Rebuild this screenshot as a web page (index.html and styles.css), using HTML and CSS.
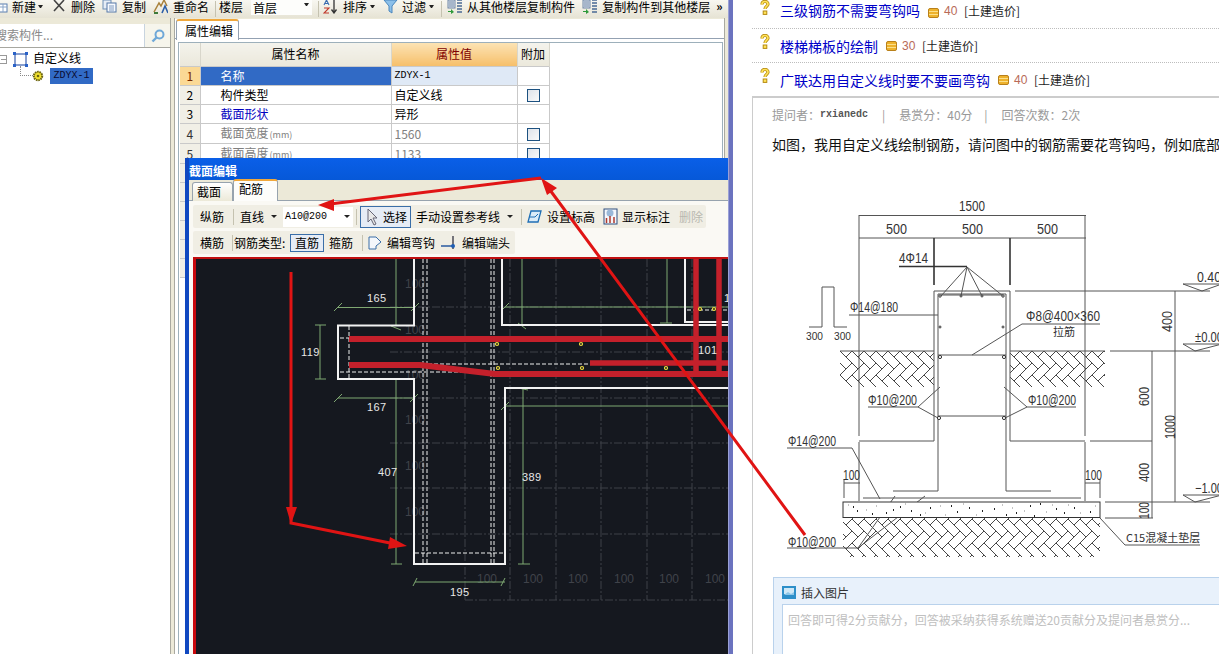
FILE: index.html
```html
<!DOCTYPE html>
<html lang="zh-CN">
<head>
<meta charset="utf-8">
<title>自定义线</title>
<link rel="stylesheet" href="styles.css">
</head>
<body>
<svg class="defs" width="0" height="0" aria-hidden="true">
  <defs>
    <path id="hbt" d="M0 24L12 12L18 18L6 30L0 24M6 6L12 0L24 12L18 18L6 6"/>
    <pattern id="herring" x="840" y="350" width="12" height="24" patternUnits="userSpaceOnUse">
      <g fill="none" stroke="#444" stroke-width=".9">
        <use href="#hbt"/><use href="#hbt" x="-12"/><use href="#hbt" y="-24"/><use href="#hbt" x="-12" y="-24"/>
      </g>
    </pattern>
    <symbol id="list" viewBox="0 0 15 15">
      <rect x="1" y="1" width="7" height="8" fill="#dfe6ef" stroke="#6f86a6"/>
      <path d="M2 3h5M2 5h5M2 7h5" stroke="#6f86a6"/>
      <path d="M10 1h5M10 4h5M10 7h5M10 10h5M10 13h5" stroke="#4a6a94" stroke-width="1.4"/>
      <path d="M1 12h3v-2l3 3-3 2v-2H1z" fill="#2e9a3a"/>
    </symbol>
    <symbol id="qmark" viewBox="0 0 10 15">
      <path d="M2 4.5C2 2 3.5 1.5 5 1.5S8 2.5 8 4.3 5 6.5 5 9" fill="none" stroke="#b58a10" stroke-width="3.2"/>
      <path d="M2 4.5C2 2 3.5 1.5 5 1.5S8 2.5 8 4.3 5 6.5 5 9" fill="none" stroke="#ffe35a" stroke-width="1.6"/>
      <rect x="3.2" y="11" width="3.6" height="3.4" fill="#ffe35a" stroke="#b58a10"/>
    </symbol>
    <symbol id="coin" viewBox="0 0 11 10">
      <rect x=".5" y=".5" width="10" height="9" rx="1.5" fill="#eeb22c" stroke="#b9801a"/>
      <path d="M1 3.5h9M1 6.500h9" stroke="#fbe08a"/>
    </symbol>
  </defs>
</svg>

<div class="page">
  <div class="app">
    <div class="toolbar">
      <svg class="ico ml-n6" width="14" height="14" viewBox="0 0 14 14"><rect x="1" y="5" width="12" height="8" fill="#fff" stroke="#5b7fb0"/><path d="M1 8h12M5 5v8M9 5v8" stroke="#8aa5c8"/></svg>
      <span class="t ml-4">新建</span><i class="caret ml-2"></i>
      <svg class="ico ml-10" width="12" height="13" viewBox="0 0 12 13"><path d="M1 1l10 11M11 1L1 12" stroke="#444" stroke-width="1.6"/></svg>
      <span class="t ml-6">删除</span>
      <svg class="ico ml-7" width="15" height="14" viewBox="0 0 15 14"><rect x="1" y="1" width="8" height="9" fill="#e6edf6" stroke="#6f8fb6"/><rect x="5" y="4" width="9" height="9" fill="#f6f9fd" stroke="#5679a8"/><path d="M7 7h5M7 9h5M7 11h5" stroke="#7f9ac0"/></svg>
      <span class="t ml-5">复制</span>
      <svg class="ico ml-7" width="15" height="15" viewBox="0 0 15 15"><path d="M1 13l5-9 2 3 3-6 3 6" fill="none" stroke="#a9823c" stroke-width="1.5"/><path d="M9 14l3-7 3 7" fill="none" stroke="#2d5fa8" stroke-width="1.6"/><path d="M1 14h4" stroke="#3d7a3a" stroke-width="2"/></svg>
      <span class="t ml-5">重命名</span>
      <i class="sep ml-6"></i>
      <span class="t ml-3">楼层</span>
      <span class="combo top-combo ml-8"><span class="t">首层</span><i class="caret dark"></i></span>
      <i class="sep ml-6"></i>
      <svg class="ico ml-4" width="15" height="15" viewBox="0 0 15 15"><path d="M1 6l2.5-5L6 6M2 4.5h3" fill="none" stroke="#3a6cb0" stroke-width="1.1"/><path d="M1 9h5L1 14h5" fill="none" stroke="#c0392b" stroke-width="1.1"/><path d="M11 1v12M8.5 10.5L11 14l2.5-3.5" fill="none" stroke="#333" stroke-width="1.3"/></svg>
      <span class="t ml-5">排序</span><i class="caret ml-3"></i>
      <svg class="ico ml-8" width="15" height="15" viewBox="0 0 15 15"><path d="M1 1h13L9 7v7L6 12V7z" fill="#8cc0ea" stroke="#4a86bd"/></svg>
      <span class="t ml-4">过滤</span><i class="caret ml-3"></i>
      <i class="sep ml-7"></i>
      <svg class="ico ml-5" width="15" height="15"><use href="#list"/></svg>
      <span class="t ml-5">从其他楼层复制构件</span>
      <svg class="ico ml-7" width="15" height="15"><use href="#list"/></svg>
      <span class="t ml-5">复制构件到其他楼层</span>
      <span class="t more ml-6">»</span>
    </div>

    <div class="workspace">
      <aside class="tree-pane">
        <div class="search">
          <span class="search-input">搜索构件...</span>
          <span class="search-btn">
            <svg width="16" height="16" viewBox="0 0 16 16"><circle cx="9.5" cy="6.5" r="4" fill="none" stroke="#6fa8d8" stroke-width="2"/><path d="M6.5 9.500L2.500 13.500" stroke="#6fa8d8" stroke-width="2.4"/></svg>
          </span>
        </div>
        <div class="tree">
          <div class="node root">
            <i class="minus"></i>
            <svg class="node-ico" width="15" height="15" viewBox="0 0 15 15"><rect x="2" y="2" width="11" height="11" fill="none" stroke="#123f9c"/><path d="M0 0h3v3H0zM12 0h3v3h-3zM0 12h3v3H0zM12 12h3v3h-3z" fill="#2a62c8"/></svg>
            <span class="t">自定义线</span>
          </div>
          <div class="node leaf">
            <i class="branch"></i>
            <svg class="gear" width="12" height="12" viewBox="0 0 12 12"><circle cx="6" cy="6" r="4.2" fill="#f0e030" stroke="#6b6410" stroke-width="2" stroke-dasharray="1.600 .7"/><circle cx="6" cy="6" r="1.300" fill="#6b6410"/></svg>
            <span class="selected">ZDYX-1</span>
          </div>
        </div>
      </aside>
      <div class="splitter"></div>
      <section class="props">
        <div class="tabstrip"><span class="tab active t">属性编辑</span></div>
        <div class="grid-frame">
          <table class="prop-table">
            <colgroup><col class="c-num"><col class="c-name"><col class="c-val"><col class="c-add"></colgroup>
            <thead>
              <tr><th class="num"></th><th>属性名称</th><th class="hot">属性值</th><th>附加</th></tr>
            </thead>
            <tbody>
              <tr class="cur"><td class="num">1</td><td class="name">名称</td><td class="val mono">ZDYX-1</td><td></td></tr>
              <tr><td class="num">2</td><td class="name">构件类型</td><td class="val">自定义线</td><td><i class="check"></i></td></tr>
              <tr><td class="num">3</td><td class="name blue">截面形状</td><td class="val">异形</td><td></td></tr>
              <tr class="dim"><td class="num">4</td><td class="name">截面宽度<small>(mm)</small></td><td class="val">1560</td><td><i class="check"></i></td></tr>
              <tr class="dim"><td class="num">5</td><td class="name">截面高度<small>(mm)</small></td><td class="val">1133</td><td><i class="check"></i></td></tr>
              <tr><td class="num"></td><td></td><td></td><td></td></tr>
              <tr><td class="num"></td><td></td><td></td><td></td></tr>
              <tr><td class="num"></td><td></td><td></td><td></td></tr>
              <tr><td class="num"></td><td></td><td></td><td></td></tr>
              <tr><td class="num"></td><td></td><td></td><td></td></tr>
              <tr><td class="num"></td><td></td><td></td><td></td></tr>
            </tbody>
          </table>
        </div>
      </section>
    </div>
  </div>

  <div class="divider"></div>

  <main class="qa">
    <ul class="questions">
      <li class="q first"><svg class="qm" width="10" height="15"><use href="#qmark"/></svg><a class="qlink">三级钢筋不需要弯钩吗</a><svg class="coin" width="11" height="10"><use href="#coin"/></svg><span class="score">40</span><span class="cat">[土建造价]</span></li>
      <li class="q"><svg class="qm" width="10" height="15"><use href="#qmark"/></svg><a class="qlink">楼梯梯板的绘制</a><svg class="coin" width="11" height="10"><use href="#coin"/></svg><span class="score">30</span><span class="cat">[土建造价]</span></li>
      <li class="q last"><svg class="qm" width="10" height="15"><use href="#qmark"/></svg><a class="qlink">广联达用自定义线时要不要画弯钩</a><svg class="coin" width="11" height="10"><use href="#coin"/></svg><span class="score">40</span><span class="cat">[土建造价]</span></li>
    </ul>
    <article class="detail">
      <div class="meta"><span>提问者：</span><b class="author">rxianedc</b><span class="bar">|</span><span class="reward">悬赏分：40分</span><span class="bar">|</span><span>回答次数：2次</span></div>
      <p class="body-text">如图，我用自定义线绘制钢筋，请问图中的钢筋需要花弯钩吗，例如底部的钢筋</p>
      <svg class="blueprint" width="447" height="370" viewBox="772 190 447 370">
        <rect x="840" y="350" width="94" height="36" fill="url(#herring)"/>
        <rect x="1010" y="350" width="95" height="36" fill="url(#herring)"/>
        <rect x="843" y="517" width="257" height="39" fill="url(#herring)"/>
        <g class="ln">
          <path d="M859 214.500H1086M859 237H1086M859 214V435M859 441V500M1085 214V435M1085 441V500"/>
          <path d="M934 290H1010M938 293H1006M934 290V440M1010 290V440M938 293V490M1006 293V490M859 440H934M1010 440H1085M893 490H938M1006 490H1051"/>
          <path d="M809 326H822V286H834V326H847M967 266L941 295M967 266L961 295M967 266L982 295M967 266L1003 295M941 294H1003"/>
          <path d="M849 314H938M1022 323H1100M1022 323L972 354M938 354H1006M938 415H1006"/>
          <path d="M1015 290H1210M1110 350H1210M1175 290V501M1152 350V517M1090 440H1152M1105 501H1210M1105 517H1153"/>
          <path d="M1183 283H1222L1202 290ZM1183 343H1222L1195 350ZM1183 494H1222L1195 501Z"/>
          <path d="M868 406H918L940 386M918 406L938 417M1027 406H1076M1027 406L1004 386M1027 406L1005 417"/>
          <path d="M787 447H852L880 498M844 482H860M844 478V497M1085 482H1100M1100 478V497"/>
          <path d="M863 497H1081M787 547H858L895 495M858 547L925 495M1100 517L1125 544H1200"/>
          <path d="M840 350H934M1010 350H1105"/>
        </g>
        <path class="ln bold" d="M934 237V284M1010 237V284M899 265.500H967"/>
        <rect class="slab" x="843" y="501" width="257" height="15.500"/>
        <path class="speck" d="M853 506h1M857 510h1M886 512h1M893 509h1M900 506h1M911 510h1M930 507h1M951 505h1M957 511h1M969 507h1M982 510h1M994 508h1M1016 512h1M1040 503h1M1056 508h1M1074 507h1M1090 511h1M872 513h1M920 514h1M1006 514h1M1034 515h1M1030 505h1M1064 512h1"/>
        <path class="speck2" d="M848 504h1M866 509h1M876 505h1M905 503h1M925 512h1M940 505h1M945 514h1M963 503h1M976 514h1M1002 504h1M1012 507h1M1024 510h1M1046 511h1M1052 504h1M1068 504h1M1080 512h1M1095 505h1"/>
        <g class="dots"><circle cx="940" cy="295" r="1.200"/><circle cx="1003" cy="295" r="1.200"/><circle cx="961" cy="295" r="1"/><circle cx="982" cy="295" r="1"/><circle cx="940" cy="326" r="1"/><circle cx="1003" cy="326" r="1"/><circle cx="940" cy="356" r="1.600"/><circle cx="1004" cy="356" r="1.600"/><circle cx="939" cy="417" r="1.600"/><circle cx="1004" cy="417" r="1.600"/></g>
        <g class="cad">
          <text x="959" y="210" textLength="26" lengthAdjust="spacingAndGlyphs">1500</text>
          <text x="886" y="233" textLength="21" lengthAdjust="spacingAndGlyphs">500</text>
          <text x="962" y="233" textLength="21" lengthAdjust="spacingAndGlyphs">500</text>
          <text x="1037" y="233" textLength="21" lengthAdjust="spacingAndGlyphs">500</text>
          <text x="899" y="262" textLength="29" lengthAdjust="spacingAndGlyphs">4Φ14</text>
          <text x="850" y="311" textLength="48" lengthAdjust="spacingAndGlyphs">Φ14@180</text>
          <text x="806" y="339" class="small" textLength="17" lengthAdjust="spacingAndGlyphs">300</text>
          <text x="834" y="339" class="small" textLength="17" lengthAdjust="spacingAndGlyphs">300</text>
          <text x="1026" y="320" textLength="74" lengthAdjust="spacingAndGlyphs">Φ8@400×360</text>
          <text x="1053" y="335" class="cjk">拉筋</text>
          <text x="1197" y="281" textLength="24" lengthAdjust="spacingAndGlyphs">0.40</text>
          <text x="1195" y="341" textLength="28" lengthAdjust="spacingAndGlyphs">±0.00</text>
          <text x="1195" y="492" textLength="28" lengthAdjust="spacingAndGlyphs">−1.00</text>
          <text x="868" y="404" textLength="49" lengthAdjust="spacingAndGlyphs">Φ10@200</text>
          <text x="1028" y="404" textLength="48" lengthAdjust="spacingAndGlyphs">Φ10@200</text>
          <text x="788" y="445" textLength="48" lengthAdjust="spacingAndGlyphs">Φ14@200</text>
          <text x="843" y="479" textLength="17" lengthAdjust="spacingAndGlyphs">100</text>
          <text x="1085" y="479" textLength="17" lengthAdjust="spacingAndGlyphs">100</text>
          <text x="788" y="546" textLength="48" lengthAdjust="spacingAndGlyphs">Φ10@200</text>
          <text x="1126" y="541" class="cjk">C15混凝土垫层</text>
          <text transform="translate(1172 331) rotate(-90)" textLength="21" lengthAdjust="spacingAndGlyphs">400</text>
          <text transform="translate(1149 405) rotate(-90)" textLength="19" lengthAdjust="spacingAndGlyphs">600</text>
          <text transform="translate(1175 438) rotate(-90)" textLength="24" lengthAdjust="spacingAndGlyphs">1000</text>
          <text transform="translate(1149 481) rotate(-90)" textLength="19" lengthAdjust="spacingAndGlyphs">400</text>
          <text transform="translate(1149 518) rotate(-90)" textLength="17" lengthAdjust="spacingAndGlyphs">100</text>
        </g>
      </svg>
      <section class="answer">
        <div class="answer-head">
          <svg width="14" height="13" viewBox="0 0 14 13"><rect width="14" height="13" fill="#2d8fc9"/><rect x="2" y="2" width="10" height="6" fill="#cfe8f6"/><path d="M2 9l4-3 3 2 3-2v3H2z" fill="#8cc6e8"/></svg>
          <span class="t">插入图片</span>
        </div>
        <div class="answer-input">回答即可得2分贡献分，回答被采纳获得系统赠送20贡献分及提问者悬赏分...</div>
      </section>
    </article>
  </main>
</div>

<div class="dialog">
  <div class="dlg-title">截面编辑</div>
  <div class="dlg-tabs">
    <span class="dtab t">截面</span>
    <span class="dtab on t">配筋</span>
  </div>
  <div class="dlg-panel">
    <div class="dbar">
      <span class="t">纵筋</span>
      <i class="sep ml-9"></i>
      <span class="t ml-6">直线</span><i class="caret ml-7"></i>
      <span class="combo d-combo ml-6"><span class="mono">A10@200</span><i class="caret dark"></i></span>
      <i class="sep ml-3"></i>
      <span class="pressed b-select ml-3">
        <svg width="14" height="18" viewBox="0 0 14 18"><path d="M2 1v13l3-3 3 6 2-1-3-6h4z" fill="#e8e8e8" stroke="#667"/></svg>
        <span class="t">选择</span>
      </span>
      <span class="t ml-5">手动设置参考线</span><i class="caret ml-7"></i>
      <i class="sep ml-8"></i>
      <svg class="ml-5" width="15" height="15" viewBox="0 0 15 15"><path d="M4 2h10l-3 11H1z" fill="#dcecf8" stroke="#1f6fb5" stroke-width="1.300"/><path d="M3 8h5l3-3" fill="none" stroke="#1f6fb5"/></svg>
      <span class="t ml-5">设置标高</span>
      <svg class="ml-8" width="15" height="17" viewBox="0 0 15 17"><rect x="1" y="1" width="13" height="15" fill="#f4f7fb" stroke="#2f4f7f"/><circle cx="7" cy="5" r="3.500" fill="#9ab8d8"/><path d="M3.500 15v-5M7 15V8M11 15v-6" stroke="#b03a2e" stroke-width="1.500"/></svg>
      <span class="t ml-4">显示标注</span>
      <span class="t off ml-9">删除</span>
    </div>
    <div class="dbar second">
      <span class="t">横筋</span>
      <i class="sep ml-8"></i>
      <span class="t ml-1 w-type">钢筋类型:</span>
      <span class="pressed b-straight ml-5"><span class="t">直筋</span></span>
      <span class="t ml-5">箍筋</span>
      <i class="sep ml-9"></i>
      <svg class="ml-5" width="15" height="15" viewBox="0 0 15 15"><path d="M1 2h7l5 5-5 4v3H1z" fill="#f4f7fb" stroke="#3a6ea8"/></svg>
      <span class="t ml-4">编辑弯钩</span>
      <svg class="ml-6" width="17" height="15" viewBox="0 0 17 15"><path d="M0 11h13" stroke="#2a5aa0" stroke-width="1.500"/><path d="M12 1v13" stroke="#223" stroke-width="1.200"/><circle cx="12" cy="11" r="2" fill="#1f5fb5"/></svg>
      <span class="t ml-4">编辑端头</span>
    </div>
    <div class="canvas">
      <svg width="532" height="395" viewBox="196 259 532 395">
        <path class="grid" d="M465 259V600M510 259V600M556 259V600M601 259V600M647 259V600M692 259V600"/>
        <path class="grid" d="M390 307H728M390 352H728M390 398H728M390 443H728M390 488H728M390 534H728M465 600H728"/>
        <g class="faint">
          <text x="405" y="288">100</text><text x="405" y="334">100</text><text x="405" y="379">100</text><text x="405" y="424">100</text><text x="405" y="470">100</text><text x="405" y="516">100</text>
          <text x="477" y="583">100</text><text x="523" y="583">100</text><text x="568" y="583">100</text><text x="614" y="583">100</text><text x="659" y="583">100</text><text x="705" y="583">100</text>
        </g>
        <path class="dash" d="M423 259V564M427 259V564M491 259V564M494 259V564M415 553H505M349 326V379M340 338H350M340 372H490M350 364H590M687 310H728"/>
        <path class="dim-ln" d="M338 307.500H415M396 259V326M396 379V564M338 398H414M320 325V379M505 307H728M522 259V325M667 259V323M505 406H728M523 388V564M415 582H505M685 340H728"/>
        <path class="dim-ln" d="M334 311L342 303M411 311L419 303M334 402L342 394M410 402L418 394M315 325H326M315 379H326M391 326L401 330M391 564H402M518 564H530M417 578L413 586M505 578L501 586M501 311L509 303M501 410L509 402M518 323L526 329M518 388L528 390M660 323H672"/>
        <path class="wall" d="M414 259V325.500H338V379H414V564H505V388H728M502 259V325H728M685 259V322H728"/>
        <path class="rebar" d="M349 339H728M349 365H420L495 374H728"/>
        <path class="rebar thin" d="M590 363H728M696 259V372M719 259V372"/>
        <g class="joint"><circle cx="497" cy="344" r="1.500"/><circle cx="581" cy="344" r="1.500"/><circle cx="498" cy="368" r="1.500"/><circle cx="582" cy="368" r="1.500"/><circle cx="666" cy="368" r="1.500"/><circle cx="700" cy="309" r="1.500"/><circle cx="714" cy="309" r="1.500"/></g>
        <g class="label">
          <text x="367" y="302">165</text><text x="367" y="411">167</text><text x="301" y="356">119</text><text x="378" y="476">407</text><text x="522" y="481">389</text><text x="450" y="596">195</text><text x="698" y="354">101</text><text x="724" y="302">1</text>
        </g>
      </svg>
    </div>
  </div>
</div>

<svg class="annot" width="1219" height="654" viewBox="0 0 1219 654" aria-hidden="true">
  <path class="arrow" d="M291 272V523L390 543M541 178L330 204M547 186L805 535"/>
  <path class="arrow-b" d="M286 507H297L291 524ZM390 537L407 546L388 549ZM318 205L334 199L334 211ZM541 178L557 188L547 195Z"/>
</svg>
</body>
</html>
```
FILE: styles.css
```css
* { box-sizing: border-box; }
html, body { margin: 0; padding: 0; }
body {
  width: 1219px;
  height: 654px;
  overflow: hidden;
  position: relative;
  background: #fff;
  color: #000;
  font: 12px/14px "Noto Sans CJK SC", "Liberation Sans", sans-serif;
}
.defs { position: absolute; }
.page { display: flex; width: 1219px; height: 654px; }
.t { white-space: nowrap; line-height: 13px; }
.mono { font-family: "Liberation Mono", monospace; font-size: 10px; white-space: nowrap; }
.ml-n6 { margin-left: -6px; }
.ml-1 { margin-left: 1px; } .ml-2 { margin-left: 2px; } .ml-3 { margin-left: 3px; }
.ml-4 { margin-left: 4px; } .ml-5 { margin-left: 5px; } .ml-6 { margin-left: 6px; }
.ml-7 { margin-left: 7px; } .ml-8 { margin-left: 8px; } .ml-9 { margin-left: 9px; }
.ml-10 { margin-left: 10px; }

/* application window */
.app { width: 728px; height: 654px; flex: none; display: flex; flex-direction: column; background: #ece9d8; overflow: hidden; }
.toolbar {
  height: 18px; flex: none; display: flex; align-items: flex-start;
  background: linear-gradient(#f8f7f1, #e6e3d4);
  overflow: hidden;
}
.ico { flex: none; margin-top: -1px; }
.caret {
  flex: none; width: 0; height: 0; align-self: center;
  border: 3px solid transparent; border-top: 3px solid #222; border-bottom: 0;
}
.toolbar .caret { margin-top: 0; position: relative; top: -3px; width: 5px; border-left-width: 2.5px; border-right-width: 2.5px; }
.sep { flex: none; width: 1px; height: 16px; background: #c5c2b0; align-self: center; }
.more { font-weight: 700; line-height: 11px; }
.combo { flex: none; display: flex; align-items: center; justify-content: space-between; background: #fff; }
.top-combo { width: 61px; height: 15px; padding: 0 3px 0 2px; background: #fdfdfb; }
.workspace { flex: 1; display: flex; min-height: 0; }
.tree-pane { width: 171px; flex: none; display: flex; flex-direction: column; padding-top: 6px; border-right: 1px solid #a9a9a0; }
.search { height: 24px; flex: none; display: flex; background: #f6f5ec; border-bottom: 1px solid #a7a7a0; }
.search-input { width: 145px; background: #fff; border-right: 1px solid #c8d4df; color: #8a8a8a; line-height: 22px; text-indent: -5px; overflow: hidden; white-space: nowrap; }
.search-btn { flex: 1; display: flex; align-items: center; justify-content: center; }
.tree { flex: 1; background: #fff; padding-top: 2px; }
.node { display: flex; align-items: center; height: 16px; }
.root { height: 18px; }
.root .t { margin: -3px 0 0 5px; }
.minus { width: 7px; height: 9px; margin-top: 1px; border: 1px solid #999; border-left: 0; background: linear-gradient(#999, #999) center / 5px 1px no-repeat; }
.node-ico { margin-left: 6px; }
.leaf { position: relative; padding-left: 32px; }
.branch { position: absolute; left: 20px; top: -2px; width: 13px; height: 10px; border-left: 1px dotted #888; border-bottom: 1px dotted #888; }
.gear { flex: none; }
.selected { margin-left: 6px; width: 43px; height: 16px; background: #316ac5; color: #0a0a30; font: 10px/16px "Liberation Mono", monospace; text-align: center; }
.splitter { width: 4px; flex: none; background: #ece9d8; border-right: 1px solid #a9a9a0; }
.props { width: 550px; flex: none; background: #fff; border-right: 1px solid #a9a9a0; display: flex; flex-direction: column; padding-top: 1px; background: linear-gradient(#ece9d8 1px, #fff 1px); }
.tabstrip { height: 20px; flex: none; border-bottom: 1px solid #93a1b2; padding-left: 1px; }
.tab { display: block; width: 63px; height: 21px; padding: 3px 0 0 8px; background: #fff; border: 1px solid #93a1b2; border-top: 2px solid #f0a83c; border-bottom: 0; border-radius: 3px 3px 0 0; }
.grid-frame { margin: 3px 1px 0 3px; flex: 1; border: 1px solid #9db0bb; border-bottom: 0; padding-left: 1px; overflow: hidden; background: #fff; }
.prop-table { border-collapse: collapse; table-layout: fixed; width: 369px; }
.c-num { width: 20px; } .c-name { width: 191px; } .c-val { width: 126px; } .c-add { width: 32px; }
.prop-table th { height: 23px; padding: 0; font-weight: 400; background: linear-gradient(#f4f3ec, #ebe8db); border-right: 1px solid #d8d6cb; text-align: center; }
.prop-table th.hot { background: linear-gradient(#fce3b4, #f6bf6a); color: #800000; }
.prop-table td { height: 19px; padding: 0; border: 1px solid #c9c9c9; border-left: 0; line-height: 17px; white-space: nowrap; overflow: hidden; text-align: center; }
.prop-table td.num { background: #f1efe6; }
.prop-table td.name { padding-left: 20px; text-align: left; }
.prop-table td.val { padding-left: 3px; text-align: left; }
.cur td.num { background: #fbd995; color: #7a2a00; }
.cur td.name { background: #316ac5; color: #fff; }
.cur td.val { background: #dfe9f6; }
.blue { color: #0000c0; }
.dim td { color: #808080; }
.dim td.num { color: #333; }
small { font-size: 9px; margin-left: 1px; }
.check { display: block; width: 13px; height: 13px; margin: 2px 0 0 9px; border: 1px solid #1c5180; background: linear-gradient(135deg, #dfe3ea, #fafafa); }

/* right page */
.divider { width: 5px; flex: none; background: #6b73bf; border-left: 1px solid #9aa0d6; }
.qa { flex: 1; min-width: 0; padding-left: 19px; overflow: hidden; background: #fff; }
.questions { list-style: none; margin: 0; padding: 0; }
.q { height: 34px; display: flex; align-items: center; padding: 0 0 0 8px; border-bottom: 1px dotted #bdbdbd; position: relative; }
.q.first { height: 29px; align-items: flex-end; padding-bottom: 10px; }
.q.last { border-bottom: 0; height: 33px; }
.qm { flex: none; margin: -8px 0 0 0; }
.first .qm { margin-bottom: 3px; }
.qlink { margin-left: 10px; color: #0000c8; font-size: 14px; line-height: 16px; white-space: nowrap; }
.coin { flex: none; margin-left: 8px; }
.score { margin-left: 5px; width: 20px; color: #b86a58; font: 12px/14px "Liberation Sans", sans-serif; }
.cat { color: #222; white-space: nowrap; line-height: 14px; }
.detail { border: 1px solid #ccc; border-right: 0; border-bottom: 0; border-width: 2px 0 0 1px; height: 560px; padding-top: 9px; margin-right: -40px; }
.meta { display: flex; height: 15px; align-items: center; padding-left: 19px; color: #999; white-space: nowrap; }
.author { font: 700 10px/14px "Liberation Mono", monospace; color: #555; }
.bar { margin: 0 14px; }
.reward { width: 71px; }
.body-text { margin: 12px 0 0 19px; font-size: 14px; line-height: 20px; white-space: nowrap; color: #111; }
.blueprint { display: block; margin-top: 37px; margin-left: 19px; }
.ln { fill: none; stroke: #555; stroke-width: 1; }
.bold { stroke: #333; stroke-width: 1.600; }
.slab { fill: #fff; stroke: #333; stroke-width: 1; }
.speck { stroke: #222; stroke-width: 2; fill: none; }
.speck2 { stroke: #888; stroke-width: 1; fill: none; }
.dots circle { fill: #fff; stroke: #333; }
.cad text { font: 14px "Liberation Sans", sans-serif; fill: #333; }
.cad .small { font-size: 11px; }
.cad .cjk { font: 11px "Noto Sans CJK SC", sans-serif; }
.answer { margin: 16px 0 0 20px; height: 80px; background: #e8f1fb; border: 1px solid #b9d2ec; padding: 0 0 0 8px; }
.answer-head { height: 26px; display: flex; align-items: center; gap: 5px; padding-top: 3px; color: #333; }
.answer-input { height: 60px; background: #fff; border: 1px solid #b9d2ec; border-right: 0; padding: 8px 5px; color: #c0c0c0; white-space: nowrap; }

/* section editor window */
.dialog {
  position: absolute; left: 185px; top: 158px; width: 543px; height: 496px;
  background: #ece9d8; border-left: 4px solid #1048c0; overflow: hidden;
}
.dlg-title { height: 22px; padding: 6px 0 0 0; background: linear-gradient(#0a5fe8, #0658d8); color: #fff; font-weight: 700; line-height: 13px; }
.dlg-tabs { height: 21px; display: flex; align-items: flex-end; padding-left: 3px; border-bottom: 1px solid #97a3ae; }
.dtab { width: 41px; height: 19px; padding: 2px 0 0 4px; margin-bottom: -1px; background: linear-gradient(#fff, #ece9d8); border: 1px solid #97a3ae; border-bottom: 0; border-radius: 3px 3px 0 0; }
.dtab.on { height: 22px; width: 45px; padding: 1px 0 0 5px; background: #fdfdfb; border-top: 2px solid #f0a83c; }
.dlg-panel { height: 453px; background: #faf9f4; padding: 4px 0 0 4px; }
.dbar { height: 23px; display: flex; align-items: center; width: 513px; padding-left: 7px; background: #f0eee4; border-radius: 2px; }
.dbar.second { width: 322px; margin-top: 3px; }
.d-combo { width: 70px; height: 20px; padding: 0 3px 0 2px; }
.pressed { flex: none; display: flex; align-items: center; background: #e6ecf5; border: 1px solid #3a6ea8; height: 22px; }
.b-select { width: 51px; padding-left: 5px; gap: 3px; }
.b-straight { width: 34px; height: 18px; justify-content: center; }
.off { color: #b8b8b0; }
.w-type { width: 51px; }
.canvas { width: 536px; margin-top: 3px; height: 397px; background: #15181f; border-top: 2px solid #c01010; border-left: 3px solid #c8080c; }
.canvas svg { display: block; }
.grid { fill: none; stroke: #3e4148; stroke-width: 1; stroke-dasharray: 8 2 2 2; }
.faint text { font: 12px "Liberation Sans", sans-serif; fill: #40434a; }
.dash { fill: none; stroke: #eee; stroke-width: 1; stroke-dasharray: 4 2; }
.dim-ln { fill: none; stroke: #7fa872; stroke-width: 1; }
.wall { fill: none; stroke: #f2f2f2; stroke-width: 2; }
.rebar { fill: none; stroke: #c4202b; stroke-width: 6; }
.rebar.thin { stroke-width: 5.500; }
.joint circle { fill: #15181f; stroke: #f0e040; stroke-width: 1.200; }
.label text { font: 11px "Liberation Sans", sans-serif; fill: #e8e8e8; letter-spacing: .4px; }

/* hand-drawn annotation on top of the screenshot */
.annot { position: absolute; left: 0; top: 0; pointer-events: none; }
.arrow { fill: none; stroke: #e01414; stroke-width: 3; }
.arrow-b { fill: #e01414; }
```
